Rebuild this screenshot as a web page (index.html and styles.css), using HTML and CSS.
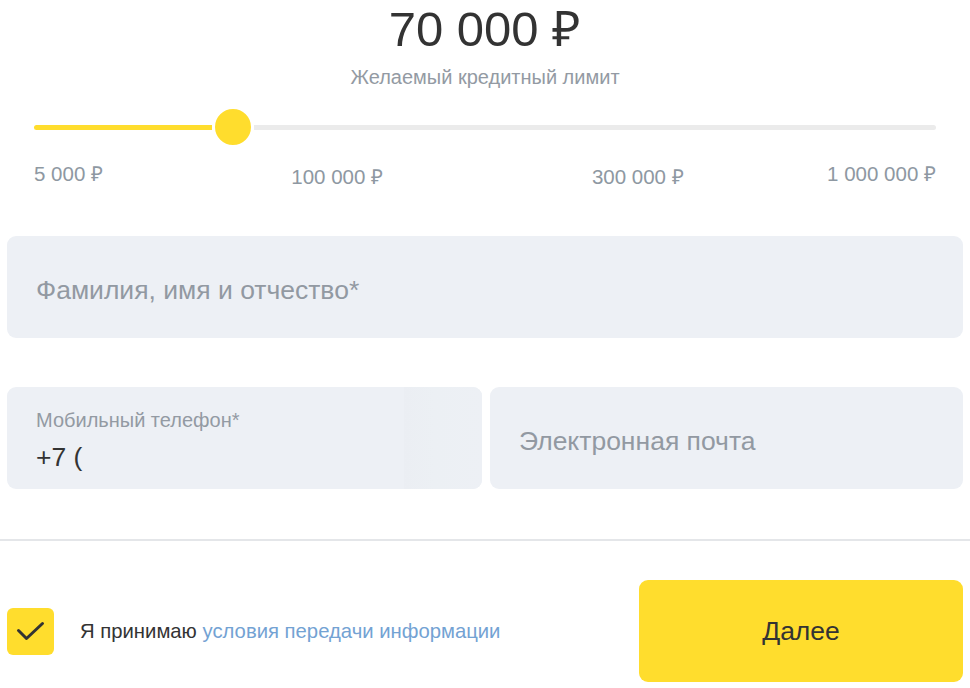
FILE: index.html
```html
<!DOCTYPE html>
<html lang="ru">
<head>
<meta charset="utf-8">
<link rel="stylesheet" href="styles.css">
</head>
<body>
<div class="page">
  <section class="amount">
    <div class="amount-value">70 000 ₽</div>
    <div class="amount-caption">Желаемый кредитный лимит</div>
    <div class="slider">
      <div class="track">
        <div class="track-fill"></div>
        <div class="thumb"></div>
        <div class="track-rest"></div>
      </div>
      <div class="scale">
        <span class="tick tick-first">5 000 ₽</span>
        <span class="tick tick-mid1">100 000 ₽</span>
        <span class="tick tick-mid2">300 000 ₽</span>
        <span class="tick tick-last">1 000 000 ₽</span>
      </div>
    </div>
  </section>

  <section class="fields">
    <div class="field field-full">
      <span class="placeholder">Фамилия, имя и отчество*</span>
    </div>
    <div class="field-row">
      <div class="field field-phone">
        <div class="phone-inner">
          <span class="label">Мобильный телефон*</span>
          <span class="value">+7 (</span>
        </div>
        <div class="phone-shade"></div>
      </div>
      <div class="field field-email">
        <span class="placeholder">Электронная почта</span>
      </div>
    </div>
  </section>

  <hr class="divider">

  <section class="submit-row">
    <label class="agree">
      <span class="checkbox">
        <svg width="47" height="47" viewBox="0 0 47 47" aria-hidden="true">
          <path d="M11.5 22.5 L19.5 30.5 L35.5 15.5" fill="none" stroke="#333" stroke-width="3" stroke-linecap="round" stroke-linejoin="round"/>
        </svg>
      </span>
      <span class="agree-text">Я принимаю <a class="link">условия передачи информации</a></span>
    </label>
    <button class="next">Далее</button>
  </section>
</div>
</body>
</html>
```
FILE: styles.css
```css
* { box-sizing: border-box; }
html, body { margin: 0; padding: 0; background: #fff; }
body {
  font-family: "Liberation Sans", Arial, sans-serif;
  color: #333;
  width: 970px;
  overflow: hidden;
}
.page { padding: 0 7px; }

.amount { padding: 1px 0 0; text-align: center; }
.amount-value {
  font-size: 49px;
  line-height: 56px;
  color: #333;
}
.amount-caption {
  margin-top: 8px;
  font-size: 20px;
  line-height: 24px;
  color: #939aa3;
}

.slider { margin: 20px 27px 0; }
.track {
  display: flex;
  align-items: center;
  height: 36px;
}
.track-fill {
  width: 178px;
  height: 5px;
  background: #ffdd2d;
  border-radius: 3px 0 0 3px;
}
.thumb {
  width: 42px;
  height: 42px;
  flex: none;
  border-radius: 50%;
  background: #ffdd2d;
  border: 3px solid #fff;
}
.track-rest {
  flex: 1;
  height: 5px;
  background: #ebebeb;
  border-radius: 0 3px 3px 0;
}
.scale {
  margin-top: 17px;
  display: grid;
  grid-template-columns: repeat(6, 1fr);
  align-items: start;
  font-size: 20.5px;
  line-height: 24px;
  color: #8e98a2;
  text-align: left;
}
.tick { white-space: nowrap; }
.tick-first { grid-column: 1; }
.tick-mid1 { grid-column: 2 / 4; justify-self: center; margin-top: 3px; padding-left: 5px; }
.tick-mid2 { grid-column: 4 / 6; justify-self: center; margin-top: 3px; padding-left: 5px; }
.tick-last { grid-column: 6; justify-self: end; }

.fields { margin-top: 47px; display: flex; flex-direction: column; gap: 49px; }
.field {
  height: 102px;
  background: #edf0f5;
  border-radius: 9px;
  padding: 6px 29px 0;
  display: flex;
  align-items: center;
  overflow: hidden;
}
.placeholder { font-size: 26.5px; color: #9299a2; }
.field-row { display: flex; gap: 8px; }
.field-phone { flex: 0 0 475px; padding: 4px 0 0 29px; }
.field-email { flex: 1; }
.phone-inner {
  flex: 1;
  display: flex;
  flex-direction: column;
}
.label { font-size: 20px; line-height: 22px; color: #939aa3; }
.value { font-size: 26.5px; line-height: 30px; color: #333; margin-top: 11px; }
.phone-shade {
  width: 78px;
  align-self: stretch;
  margin-top: -4px;
  background: linear-gradient(90deg, #ebeef3 0, #ecf0f4 40%, #edf0f5 100%);
}

.divider {
  margin: 50px -7px 0;
  border: 0;
  height: 2px;
  background: #e4e6e9;
}

.submit-row {
  margin-top: 39px;
  display: flex;
  align-items: center;
  justify-content: space-between;
}
.agree { display: flex; align-items: center; gap: 26px; }
.checkbox {
  width: 47px;
  height: 47px;
  background: #ffdd2d;
  border-radius: 6px;
  display: flex;
}
.agree-text { font-size: 20.3px; color: #333; }
.link { color: #73a2d3; text-decoration: none; }
.next {
  width: 324px;
  height: 102px;
  border: 0;
  border-radius: 9px;
  background: #ffdd2d;
  font-family: inherit;
  font-size: 26.5px;
  color: #333;
}
```
